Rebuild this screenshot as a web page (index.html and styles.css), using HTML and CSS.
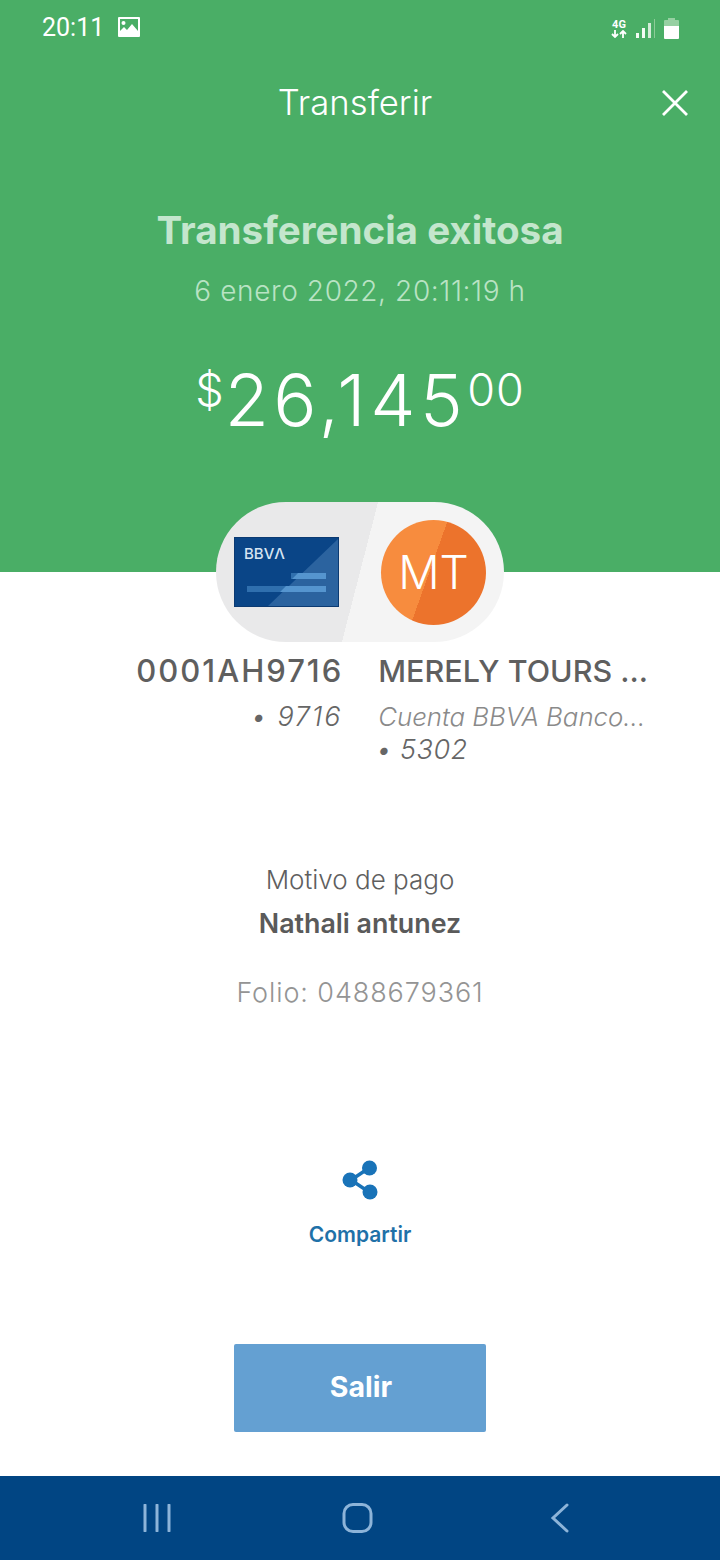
FILE: index.html
```html
<!DOCTYPE html>
<html lang="es">
<head>
<meta charset="utf-8">
<title>Transferir</title>
<link rel="stylesheet" href="styles.css">
</head>
<body>
<div class="screen">
  <header class="hero">
    <div class="status">
      <div class="status-left">
        <span class="clock">20:11</span>
        <svg class="pic" viewBox="0 0 22 20" width="22" height="20"><path fill="#fff" fill-rule="evenodd" d="M1 0h20a1 1 0 0 1 1 1v18a1 1 0 0 1-1 1H1a1 1 0 0 1-1-1V1a1 1 0 0 1 1-1zm1 2v12l4-4 3 3 5-6 6 7V2z"/><circle cx="5.500" cy="6" r="2" fill="#fff"/></svg>
      </div>
      <div class="status-right">
        <div class="net">
          <span class="net-label">4G</span>
          <svg viewBox="0 0 16 8" width="16" height="8"><path d="M4 0v7M1 4l3 3 3-3M12 8V1M9 4l3-3 3 3" fill="none" stroke="#fff" stroke-width="1.8"/></svg>
        </div>
        <svg class="signal" viewBox="0 0 19 19" width="19" height="19"><rect x="0" y="14" width="3" height="5" fill="#f4fbf5"/><rect x="6" y="9" width="3" height="10" fill="#f4fbf5"/><rect x="12" y="4" width="3" height="15" fill="#d5ecd9"/><rect x="18" y="0" width="1" height="19" fill="#8ccb97"/></svg>
        <svg class="battery" viewBox="0 0 15 21" width="15" height="21"><path d="M4 0h7v2h3a1 1 0 0 1 1 1v5H0V3a1 1 0 0 1 1-1h3z" fill="#96d0a2"/><path d="M0 8h15v12a1 1 0 0 1-1 1H1a1 1 0 0 1-1-1z" fill="#fff"/></svg>
      </div>
    </div>
    <div class="nav">
      <h1 class="nav-title">Transferir</h1>
      <svg class="close" viewBox="0 0 28 28" width="28" height="28"><path d="M2 2l24 24M26 2L2 26" stroke="#fff" stroke-width="2.8" fill="none"/></svg>
    </div>
    <h2 class="result">Transferencia exitosa</h2>
    <p class="date">6 enero 2022, 20:11:19 h</p>
    <p class="amount"><span class="sup sup-sign">$</span>26,145<span class="sup sup-cents">00</span></p>
  </header>

  <main class="body">
    <div class="pill">
      <div class="pill-left">
        <svg class="card" viewBox="0 0 105 70" width="105" height="70">
          <rect x=".5" y=".5" width="104" height="69" fill="#0a4587" stroke="#0b3a72"/>
          <path d="M34 69L104 2v67z" fill="#2b639f"/>
          <rect x="57" y="36" width="35" height="6" fill="#2f6fae"/>
          <rect x="13" y="49" width="79" height="6" fill="#2f6fae"/>
          <path d="M64 36h28v6H58zM52 49h40v6H46z" fill="#5595cf"/>
          <text x="10" y="22" class="card-logo">BBVΛ</text>
        </svg>
      </div>
      <div class="pill-right">
        <div class="avatar">MT</div>
      </div>
    </div>

    <div class="accounts">
      <div class="acct acct-from">
        <div class="acct-name acct-code">0001AH9716</div>
        <div class="acct-num acct-num-from">• 9716</div>
      </div>
      <div class="acct acct-to">
        <div class="acct-name">MERELY TOURS ...</div>
        <div class="acct-bank">Cuenta BBVA Banco...</div>
        <div class="acct-num acct-num-to">• 5302</div>
      </div>
    </div>

    <p class="motive-label">Motivo de pago</p>
    <p class="motive">Nathali antunez</p>
    <p class="folio">Folio: 0488679361</p>

    <div class="share">
      <svg viewBox="0 0 36 40" width="36" height="40"><path d="M27 8L9 20l18 12" fill="none" stroke="#1973b8" stroke-width="3.500"/><circle cx="27.500" cy="8" r="7.500" fill="#1973b8"/><circle cx="8" cy="20" r="7.500" fill="#1973b8"/><circle cx="28" cy="32" r="7.500" fill="#1973b8"/></svg>
      <span class="share-label">Compartir</span>
    </div>

    <div class="exit">Salir</div>
  </main>

  <footer class="sysnav">
    <svg viewBox="0 0 30 28" width="30" height="28"><path d="M4 1v26M16 1v26M28 1v26" stroke="#8db4d9" stroke-width="3" stroke-linecap="round"/></svg>
    <svg viewBox="0 0 32 30" width="32" height="30"><rect x="2" y="1.500" width="27" height="27" rx="9" fill="none" stroke="#8db4d9" stroke-width="3"/></svg>
    <svg class="sysnav-back" viewBox="0 0 20 30" width="20" height="30"><path d="M17 2L3 15l14 13" fill="none" stroke="#8db4d9" stroke-width="3" stroke-linecap="round"/></svg>
  </footer>
</div>
</body>
</html>
```
FILE: styles.css
```css
* { box-sizing: border-box; }
html, body { margin: 0; padding: 0; }
body { background: #fff; font-family: Inter, "Liberation Sans", sans-serif; font-variant-numeric: tabular-nums; }
p, h1, h2 { margin: 0; font-weight: normal; }

.screen { width: 720px; height: 1560px; display: flex; flex-direction: column; overflow: hidden; }

.hero { height: 572px; flex: none; background: #4aae66; color: #fff; text-align: center; padding: 15px 42px 0; display: flex; flex-direction: column; }
.status { display: flex; justify-content: space-between; align-items: center; height: 26px; margin-right: -23px; padding-right: 22px; }
.status-left { display: flex; align-items: center; gap: 14px; }
.clock { font: 400 25px/26px Roboto, sans-serif; }
.pic { display: block; margin-top: -2px; }
.status-right { display: flex; align-items: center; gap: 9px; }
.net { display: flex; flex-direction: column; align-items: center; width: 16px; }
.net-label { font: 700 11px/11px Roboto, sans-serif; }
.net svg { display: block; }
.signal { display: block; }
.battery { display: block; }

.nav { position: relative; height: 40px; margin-top: 41px; }
.nav-title { font: 300 34.700px/40px Inter, sans-serif; color: #fff; padding-right: 10px; }
.close { position: absolute; right: -11px; top: 7px; }

.result { margin-top: 86px; font: 700 38.600px/44px Inter, sans-serif; color: #c4e6cd; }
.date { margin-top: 23px; font: 300 28px/32px Inter, sans-serif; letter-spacing: .6px; color: #b9e3c4; }
.amount { margin-top: 53px; font: 300 72px/80px Inter, sans-serif; letter-spacing: 4.500px; color: #fff; }
.sup { font-size: 45px; letter-spacing: 1px; vertical-align: 20px; line-height: 0; }

.body { flex: 1; display: flex; flex-direction: column; align-items: center; color: #5a5a5a; }
.pill { width: 288px; height: 140px; margin-top: -70px; border-radius: 70px; overflow: hidden; display: flex; position: relative; background: linear-gradient(104.5deg, #e9e9ea 0 50%, #f4f4f4 50%); }
.pill-left { width: 122px; margin-left: 18px; margin-top: 35px; }
.card { display: block; }
.card-logo { font: 500 15px Inter, sans-serif; fill: #d6e4f2; }
.pill-right { margin-left: 25px; margin-top: 18px; }
.avatar { width: 105px; height: 105px; border-radius: 50%; background: linear-gradient(109.600deg, #f78c3e 0 47%, #ec732c 47%); color: #fff; font: 300 46px/105px Inter, sans-serif; text-align: center; }

.accounts { width: 720px; display: flex; gap: 37px; margin-top: 11px; }
.acct { width: 341.500px; }
.acct-from { text-align: right; }
.acct-to { width: 342px; text-align: left; }
.acct-name { font: 500 30.500px/36px Inter, sans-serif; white-space: nowrap; color: #5f5f5f; }
.acct-code { font-size: 31px; letter-spacing: 2px; margin-right: -2px; }
.acct-bank { font: italic 300 25.800px/33px Inter, sans-serif; white-space: nowrap; color: #8a8a8a; margin-top: 11px; }
.acct-num { font: italic 300 27px/33px Inter, sans-serif; letter-spacing: .5px; white-space: nowrap; color: #666; }
.acct-num-from { letter-spacing: 1.800px; margin-top: 11px; margin-right: -1px; }
.acct-num-to { margin-left: -2px; }

.motive-label { margin-top: 98px; font: 300 26px/32px Inter, sans-serif; color: #5f5f5f; }
.motive { margin-top: 11px; font: 600 26.800px/32px Inter, sans-serif; color: #5a5a5a; }
.folio { margin-top: 38px; font: 300 27px/32px Inter, sans-serif; letter-spacing: .9px; color: #949494; }

.share { margin-top: 151px; display: flex; flex-direction: column; align-items: center; gap: 22px; }
.share svg { display: block; }
.share-label { font: 600 21px/26px Inter, sans-serif; color: #1f71a8; }

.exit { margin-top: 96px; width: 252px; height: 88px; padding-left: 2px; background: #64a0d2; color: #fff; font: 700 28.500px/86px Inter, sans-serif; text-align: center; border-radius: 2px; }

.sysnav { flex: none; height: 84px; background: #014583; display: flex; align-items: center; gap: 171px; padding-left: 141px; }
.sysnav svg { display: block; }
.sysnav .sysnav-back { margin-left: 5px; }
```
